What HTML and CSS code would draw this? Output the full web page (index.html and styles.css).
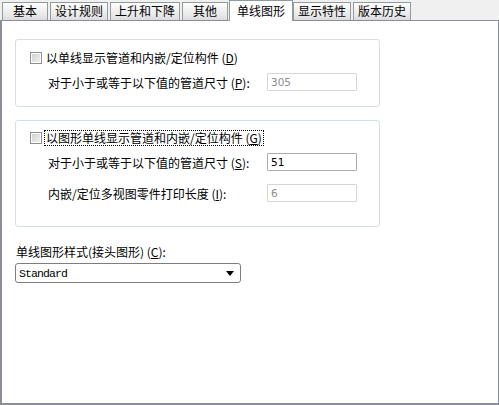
FILE: index.html
```html
<!DOCTYPE html>
<html lang="zh-CN">
<head>
    <meta charset="UTF-8">
    <title>单线图形</title>
    <link rel="stylesheet" href="styles.css">
</head>
<body>
    <div class="tabs">
        <div class="tab">基本</div>
        <div class="tab">设计规则</div>
        <div class="tab">上升和下降</div>
        <div class="tab">其他</div>
        <div class="tab active">单线图形</div>
        <div class="tab">显示特性</div>
        <div class="tab">版本历史</div>
    </div>
    <div class="panel">
        <div class="group group-one">
            <div class="check-row">
                <span class="box"></span>
                <span class="check-text">以单线显示管道和内嵌/定位构件 (<u>D</u>)</span>
            </div>
            <div class="field-row first">
                <span class="field-label">对于小于或等于以下值的管道尺寸 (<u>P</u>):</span>
                <span class="field off">305</span>
            </div>
        </div>
        <div class="group group-two">
            <div class="check-row">
                <span class="box"></span>
                <span class="check-text focus">以图形单线显示管道和内嵌/定位构件 (<u>G</u>)</span>
            </div>
            <div class="field-row first">
                <span class="field-label">对于小于或等于以下值的管道尺寸 (<u>S</u>):</span>
                <span class="field">51</span>
            </div>
            <div class="field-row second">
                <span class="field-label">内嵌/定位多视图零件打印长度 (<u>I</u>):</span>
                <span class="field off">6</span>
            </div>
        </div>
        <div class="style-label">单线图形样式(接头图形) (<u>C</u>):</div>
        <div class="select">
            <span class="select-text">Standard</span>
            <span class="arrow"></span>
        </div>
    </div>
</body>
</html>
```

FILE: styles.css
```css
body {
    margin: 0;
    background: #f0f0f0;
    font-family: "Noto Sans CJK SC", "Liberation Sans", sans-serif;
    font-size: 12px;
    color: #000;
    width: 499px;
    height: 405px;
    overflow: hidden;
}

.tabs {
    display: flex;
    align-items: flex-end;
    height: 20px;
    padding-left: 2px;
}

.tab {
    box-sizing: border-box;
    min-width: 46px;
    height: 18px;
    padding: 0 4px;
    margin-right: 2px;
    border: 1px solid #919b9c;
    border-bottom: none;
    background: linear-gradient(#fdfdfd, #e9e9e9 70%, #dcdcdc);
    line-height: 16px;
    text-align: center;
}

.tab.active {
    height: 21px;
    margin: 0 0 -1px -1px;
    padding: 0 7px;
    background: #fff;
    line-height: 19px;
    position: relative;
    z-index: 1;
}

.panel {
    box-sizing: border-box;
    height: 385px;
    background: #fff;
    border: 1px solid #8b8e96;
    border-left-width: 2px;
    border-bottom-width: 2px;
    padding: 18px 0 0 13px;
}

.group {
    box-sizing: border-box;
    width: 365px;
    border: 1px solid #d5dfe5;
    border-radius: 3px;
    padding-left: 14px;
}

.group-one {
    height: 68px;
    padding-top: 11px;
}

.group-two {
    height: 107px;
    margin-top: 13px;
    padding-top: 10px;
}

.check-row {
    display: flex;
    align-items: center;
    height: 14px;
}

.box {
    box-sizing: border-box;
    width: 12px;
    height: 12px;
    border: 1px solid #8f8f8f;
    background: linear-gradient(135deg, #cfcfcf, #f4f4f4);
    box-shadow: inset 0 0 0 1px #fff;
    margin-right: 3px;
}

.check-text {
    line-height: 14px;
    padding: 0 1px;
}

.focus {
    outline: 1px dotted #000;
}

.field-row {
    display: flex;
    align-items: center;
    height: 18px;
    padding-left: 18px;
}

.field-row.first {
    margin-top: 8px;
}

.field-row.second {
    margin-top: 13px;
}

.field-label {
    width: 219px;
}

.field {
    box-sizing: border-box;
    width: 90px;
    height: 18px;
    border: 1px solid #a9adb3;
    border-radius: 1px;
    padding-left: 3px;
    font-family: "DejaVu Sans", sans-serif;
    font-size: 10.5px;
    line-height: 16px;
    color: #000;
}

.field.off {
    border-color: #d3d6d9;
    color: #8d8d8d;
}

.style-label {
    margin-top: 18px;
    line-height: 14px;
    padding-left: 1px;
}

.select {
    box-sizing: border-box;
    display: flex;
    align-items: center;
    justify-content: space-between;
    width: 226px;
    height: 20px;
    margin-top: 4px;
    border: 1px solid #7d7d7d;
    border-radius: 3px;
    padding: 0 6px 0 3px;
}

.select-text {
    font-family: "Liberation Mono", monospace;
    font-size: 11.5px;
    letter-spacing: -0.9px;
}

.arrow {
    width: 0;
    height: 0;
    border-left: 4px solid transparent;
    border-right: 4px solid transparent;
    border-top: 5px solid #000;
}
```
